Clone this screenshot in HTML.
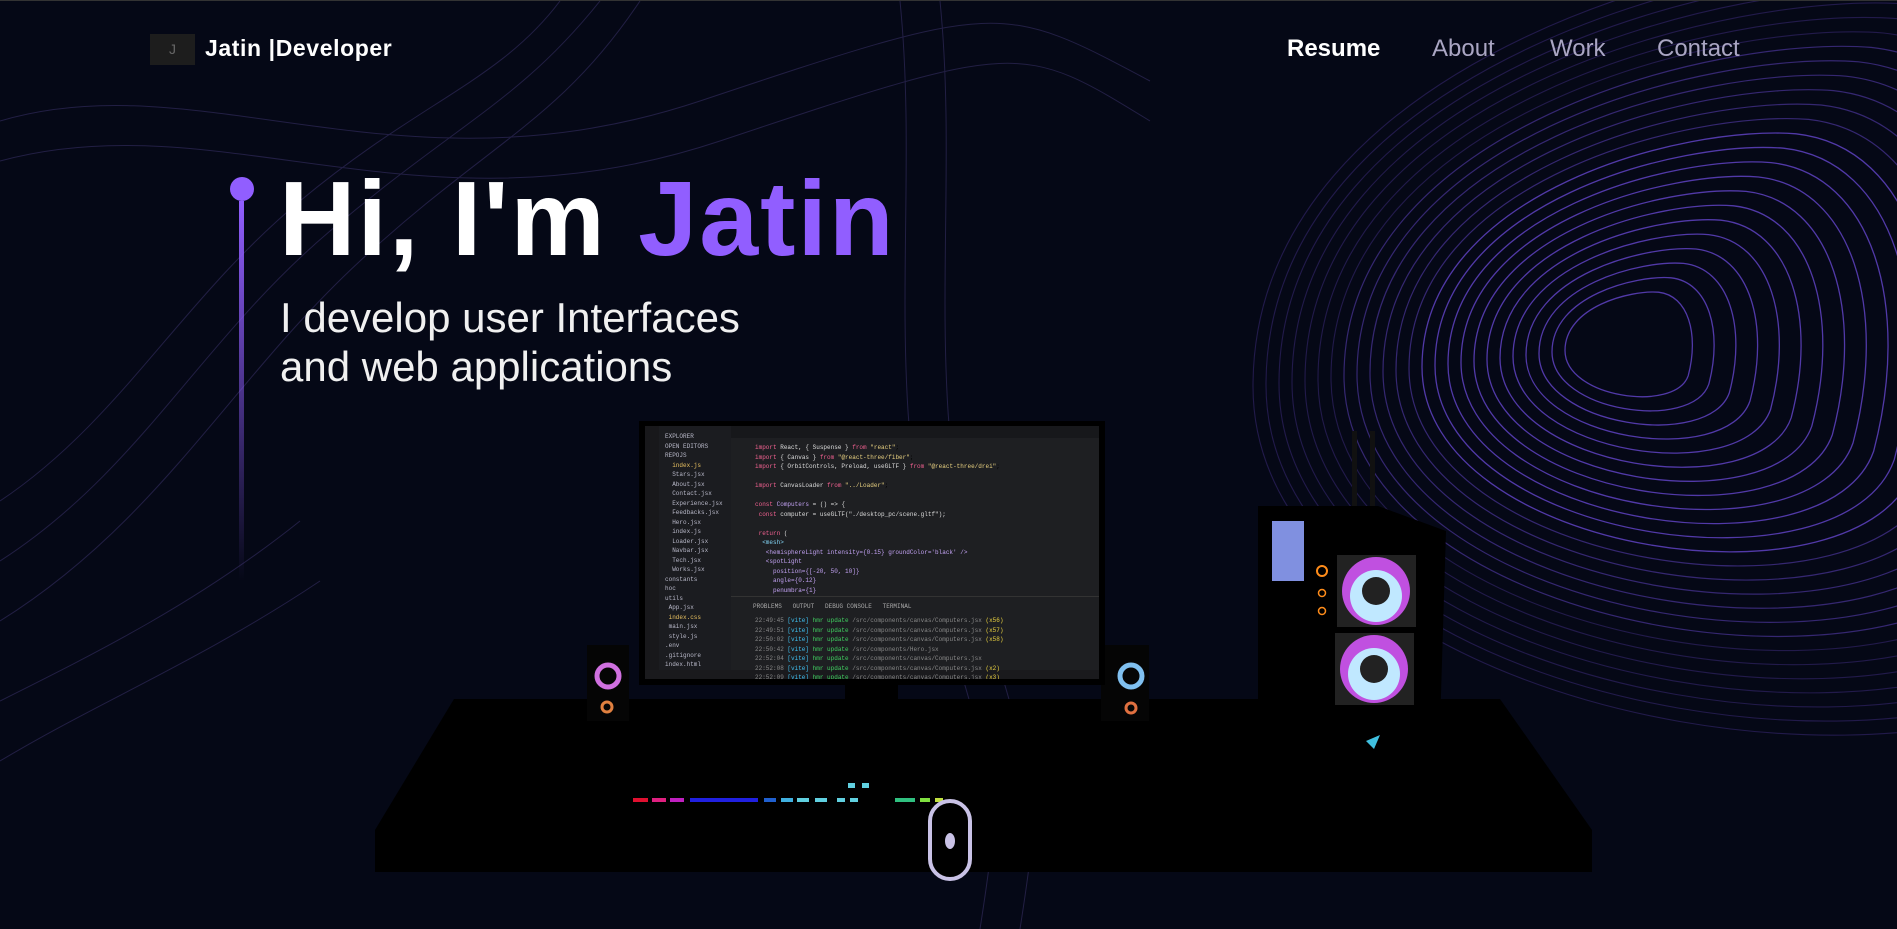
<!DOCTYPE html>
<html><head><meta charset="utf-8">
<style>
*{margin:0;padding:0;box-sizing:border-box}
body{width:1897px;height:928px;overflow:hidden;background:#050816;font-family:"Liberation Sans",sans-serif;position:relative;border-top:1px solid #333}
.abs{position:absolute}
.nav a{position:absolute;top:34px;font-size:24px;color:#aaa6c3;text-decoration:none}
.code div{white-space:nowrap;font-family:"Liberation Mono",monospace;font-size:6px;line-height:9.5px}
</style></head><body>
<svg class="abs" style="left:0;top:0" width="1897" height="928">
<defs>
<path id="h" d="M-50,-5 C-50,-45 10,-60 35,-58 C62,-55 72,-20 62,18 C50,52 -50,38 -50,-5Z" fill="none" vector-effect="non-scaling-stroke"/>
<linearGradient id="lg" x1="0" y1="0" x2="0" y2="1"><stop offset="0" stop-color="#915eff"/><stop offset="1" stop-color="#915eff" stop-opacity="0"/></linearGradient>
</defs>
<g stroke="#5a3fb8" stroke-width="1.3" opacity="0.9">
<use href="#h" transform="translate(1620,355) scale(1.1)"/>
<use href="#h" transform="translate(1622,358) scale(1.4)"/>
<use href="#h" transform="translate(1624,361) scale(1.7)"/>
<use href="#h" transform="translate(1626,364) scale(2.0)"/>
<use href="#h" transform="translate(1628,367) scale(2.3)"/>
<use href="#h" transform="translate(1630,370) scale(2.6)"/>
<use href="#h" transform="translate(1632,373) scale(2.9)"/>
<use href="#h" transform="translate(1634,376) scale(3.2)"/>
<use href="#h" transform="translate(1636,379) scale(3.5)"/>
<use href="#h" transform="translate(1638,382) scale(3.8)"/>
<use href="#h" transform="translate(1640,385) scale(4.1)"/>
<use href="#h" transform="translate(1642,388) scale(4.4)"/>
</g>
<g stroke="#4a3598" stroke-width="1.2" opacity="0.7">
<use href="#h" transform="translate(1644,391) scale(4.7)"/>
<use href="#h" transform="translate(1646,394) scale(5.0)"/>
<use href="#h" transform="translate(1648,397) scale(5.3)"/>
<use href="#h" transform="translate(1650,400) scale(5.6)"/>
<use href="#h" transform="translate(1652,403) scale(5.9)"/>
<use href="#h" transform="translate(1654,406) scale(6.2)"/>
</g>
<g stroke="#3a2a78" stroke-width="1.1" opacity="0.55">
<use href="#h" transform="translate(1656,409) scale(6.5)"/>
<use href="#h" transform="translate(1658,412) scale(6.8)"/>
<use href="#h" transform="translate(1660,415) scale(7.1)"/>
<use href="#h" transform="translate(1662,418) scale(7.4)"/>
<use href="#h" transform="translate(1664,421) scale(7.7)"/>
<use href="#h" transform="translate(1666,424) scale(8.0)"/>
<use href="#h" transform="translate(1668,427) scale(8.3)"/>
</g>
<g stroke="#2a2550" stroke-width="1" fill="none" opacity="0.8">
<path d="M0,120 C200,60 400,200 700,100 S1000,0 1150,80"/>
<path d="M0,160 C220,100 420,240 720,140 S1020,40 1150,120"/>
<path d="M0,500 C120,420 180,300 300,200 S500,80 560,0"/>
<path d="M0,560 C140,470 200,340 330,230 S520,100 600,0"/>
<path d="M0,620 C160,520 230,380 360,260 S560,120 640,0"/>
<path d="M900,0 C920,200 880,400 940,600 S1000,800 980,928"/>
<path d="M940,0 C960,200 920,400 980,600 S1040,800 1020,928"/>
<path d="M0,700 C100,650 200,600 300,520"/>
<path d="M0,760 C100,700 200,660 320,580"/>
</g>
<rect x="239" y="200" width="5" height="380" fill="url(#lg)"/>
<circle cx="242" cy="188" r="12" fill="#915eff"/>
</svg>

<div class="abs" style="left:150px;top:33px;width:45px;height:31px;background:#1d1d1d;color:#666;font-size:14px;text-align:center;line-height:31px">J</div>
<div class="abs" style="left:205px;top:34px;color:#fff;font-weight:bold;font-size:23px;letter-spacing:0.6px">Jatin&nbsp;|Developer</div>
<div class="nav">
<a style="left:1287px;color:#fff;font-weight:bold">Resume</a>
<a style="left:1432px">About</a>
<a style="left:1550px">Work</a>
<a style="left:1657px">Contact</a>
</div>
<div class="abs" style="left:279px;top:158px;font-size:106px;font-weight:bold;color:#fff;letter-spacing:2px;line-height:120px">Hi, I'm <span style="color:#915eff">Jatin</span></div>
<div class="abs" style="left:280px;top:292px;font-size:42px;color:#f0f0f0;line-height:49px">I develop user Interfaces<br>and web applications</div>

<svg class="abs" style="left:0;top:0" width="1897" height="928">
<polygon points="454,698 1500,698 1592,829 375,829" fill="#000"/>
<rect x="375" y="829" width="1217" height="42" fill="#000"/>
<rect x="845" y="680" width="53" height="30" fill="#000"/>
<rect x="587" y="644" width="42" height="76" fill="#050505"/>
<circle cx="608" cy="675" r="11" fill="none" stroke="#d070e0" stroke-width="5"/>
<circle cx="607" cy="706" r="5" fill="none" stroke="#e08040" stroke-width="3"/>
<rect x="1101" y="644" width="48" height="76" fill="#050505"/>
<circle cx="1131" cy="675" r="11" fill="none" stroke="#80c0f0" stroke-width="5"/>
<circle cx="1131" cy="707" r="5" fill="none" stroke="#e07040" stroke-width="3"/>
<rect x="1352" y="430" width="5" height="80" fill="#111"/>
<rect x="1370" y="430" width="5" height="80" fill="#111"/>
<polygon points="1258,505 1378,505 1446,530 1440,726 1258,726" fill="#000"/>
<rect x="1272" y="520" width="32" height="60" fill="#8090e0"/>
<circle cx="1322" cy="570" r="5" fill="none" stroke="#ff8c1a" stroke-width="2"/>
<circle cx="1322" cy="592" r="3.5" fill="none" stroke="#ff8c1a" stroke-width="1.5"/>
<circle cx="1322" cy="610" r="3.5" fill="none" stroke="#ff8c1a" stroke-width="1.5"/>
<rect x="1337" y="554" width="79" height="72" fill="#222"/>
<circle cx="1376" cy="590" r="34" fill="#c050e0"/><circle cx="1376" cy="595" r="26" fill="#c0e8ff"/><circle cx="1376" cy="590" r="14" fill="#222"/>
<rect x="1335" y="632" width="79" height="72" fill="#222"/>
<circle cx="1374" cy="668" r="34" fill="#c050e0"/><circle cx="1374" cy="673" r="26" fill="#c0e8ff"/><circle cx="1374" cy="668" r="14" fill="#222"/>
<path d="M1366,740 L1380,734 L1374,748 Z" fill="#40c0e0"/>
<rect x="633" y="797" width="15" height="4" fill="#e01030"/><rect x="652" y="797" width="14" height="4" fill="#e02080"/><rect x="670" y="797" width="14" height="4" fill="#c020c0"/>
<rect x="690" y="797" width="68" height="4" fill="#2020e0"/><rect x="764" y="797" width="12" height="4" fill="#2060d0"/>
<rect x="781" y="797" width="12" height="4" fill="#40b0e0"/><rect x="797" y="797" width="12" height="4" fill="#60d0e0"/><rect x="815" y="797" width="12" height="4" fill="#60d0e0"/><rect x="837" y="797" width="8" height="4" fill="#60d0e0"/><rect x="850" y="797" width="8" height="4" fill="#60d0e0"/>
<rect x="895" y="797" width="20" height="4" fill="#30c080"/><rect x="920" y="797" width="10" height="4" fill="#80e040"/><rect x="935" y="797" width="8" height="4" fill="#c0e040"/>
<rect x="848" y="782" width="7" height="5" fill="#60d0e0"/><rect x="862" y="782" width="7" height="5" fill="#60d0e0"/>
<rect x="930" y="800" width="40" height="78" rx="20" fill="#000" stroke="#c9c2e6" stroke-width="4"/>
<ellipse cx="950" cy="840" rx="5" ry="8" fill="#c9c2e6"/>
</svg>

<div class="abs" style="left:639px;top:420px;width:466px;height:264px;background:#000;padding:5px 6px 6px 6px">
<div style="position:relative;width:100%;height:100%;background:#1e1f22;overflow:hidden">
<div class="abs" style="left:0;top:0;width:14px;height:100%;background:#18181b"></div>
<div class="abs" style="left:14px;top:0;width:72px;height:100%;background:#1b1c20"></div>
<div class="abs" style="left:86px;top:0;right:0;height:12px;background:#17181b"></div>
<div class="abs" style="left:86px;top:170px;right:0;height:1px;background:#333"></div>
<div class="abs" style="left:0;bottom:0;right:0;height:9px;background:#1a1a1d"></div>
<div class="abs code" style="left:20px;top:6px;color:#b8b8c8">
<div>EXPLORER</div><div>OPEN EDITORS</div><div>REPOJS</div><div style="color:#e8c060">&nbsp;&nbsp;index.js</div><div>&nbsp;&nbsp;Stars.jsx</div><div>&nbsp;&nbsp;About.jsx</div><div>&nbsp;&nbsp;Contact.jsx</div><div>&nbsp;&nbsp;Experience.jsx</div><div>&nbsp;&nbsp;Feedbacks.jsx</div><div>&nbsp;&nbsp;Hero.jsx</div><div>&nbsp;&nbsp;index.js</div><div>&nbsp;&nbsp;Loader.jsx</div><div>&nbsp;&nbsp;Navbar.jsx</div><div>&nbsp;&nbsp;Tech.jsx</div><div>&nbsp;&nbsp;Works.jsx</div><div>constants</div><div>hoc</div><div>utils</div><div>&nbsp;App.jsx</div><div style="color:#e8c060">&nbsp;index.css</div><div>&nbsp;main.jsx</div><div>&nbsp;style.js</div><div>.env</div><div>.gitignore</div><div>index.html</div>
</div>
<div class="abs code" style="left:110px;top:17px">
<div><span style="color:#f06090">import</span> <span style="color:#ddd">React, { Suspense } </span><span style="color:#f06090">from</span> <span style="color:#e8d080">"react"</span>;</div>
<div><span style="color:#f06090">import</span> <span style="color:#ddd">{ Canvas } </span><span style="color:#f06090">from</span> <span style="color:#e8d080">"@react-three/fiber"</span>;</div>
<div><span style="color:#f06090">import</span> <span style="color:#ddd">{ OrbitControls, Preload, useGLTF } </span><span style="color:#f06090">from</span> <span style="color:#e8d080">"@react-three/drei"</span>;</div>
<div>&nbsp;</div>
<div><span style="color:#f06090">import</span> <span style="color:#ddd">CanvasLoader </span><span style="color:#f06090">from</span> <span style="color:#e8d080">"../Loader"</span>;</div>
<div>&nbsp;</div>
<div><span style="color:#f06090">const</span> <span style="color:#c0a0f0">Computers</span> <span style="color:#ddd">= () =&gt; {</span></div>
<div><span style="color:#f06090">&nbsp;const</span> <span style="color:#ddd">computer = useGLTF("./desktop_pc/scene.gltf");</span></div>
<div>&nbsp;</div>
<div><span style="color:#f06090">&nbsp;return</span> <span style="color:#ddd">(</span></div>
<div style="color:#80d0f0">&nbsp;&nbsp;&lt;mesh&gt;</div>
<div style="color:#c0a0f0">&nbsp;&nbsp;&nbsp;&lt;hemisphereLight intensity={0.15} groundColor='black' /&gt;</div>
<div style="color:#c0a0f0">&nbsp;&nbsp;&nbsp;&lt;spotLight</div>
<div style="color:#c0a0f0">&nbsp;&nbsp;&nbsp;&nbsp;&nbsp;position={[-20, 50, 10]}</div>
<div style="color:#c0a0f0">&nbsp;&nbsp;&nbsp;&nbsp;&nbsp;angle={0.12}</div>
<div style="color:#c0a0f0">&nbsp;&nbsp;&nbsp;&nbsp;&nbsp;penumbra={1}</div>
</div>
<div class="abs code" style="left:108px;top:176px;color:#aaa"><div>PROBLEMS &nbsp; OUTPUT &nbsp; DEBUG CONSOLE &nbsp; TERMINAL</div></div>
<div class="abs code" style="left:110px;top:190px;color:#888">
<div>22:49:45 <span style="color:#40c0f0">[vite]</span> <span style="color:#40d060">hmr update</span> /src/components/canvas/Computers.jsx <span style="color:#e8d040">(x56)</span></div>
<div>22:49:51 <span style="color:#40c0f0">[vite]</span> <span style="color:#40d060">hmr update</span> /src/components/canvas/Computers.jsx <span style="color:#e8d040">(x57)</span></div>
<div>22:50:02 <span style="color:#40c0f0">[vite]</span> <span style="color:#40d060">hmr update</span> /src/components/canvas/Computers.jsx <span style="color:#e8d040">(x58)</span></div>
<div>22:50:42 <span style="color:#40c0f0">[vite]</span> <span style="color:#40d060">hmr update</span> /src/components/Hero.jsx</div>
<div>22:52:04 <span style="color:#40c0f0">[vite]</span> <span style="color:#40d060">hmr update</span> /src/components/canvas/Computers.jsx</div>
<div>22:52:08 <span style="color:#40c0f0">[vite]</span> <span style="color:#40d060">hmr update</span> /src/components/canvas/Computers.jsx <span style="color:#e8d040">(x2)</span></div>
<div>22:52:09 <span style="color:#40c0f0">[vite]</span> <span style="color:#40d060">hmr update</span> /src/components/canvas/Computers.jsx <span style="color:#e8d040">(x3)</span></div>
</div>
</div></div>
</body></html>
